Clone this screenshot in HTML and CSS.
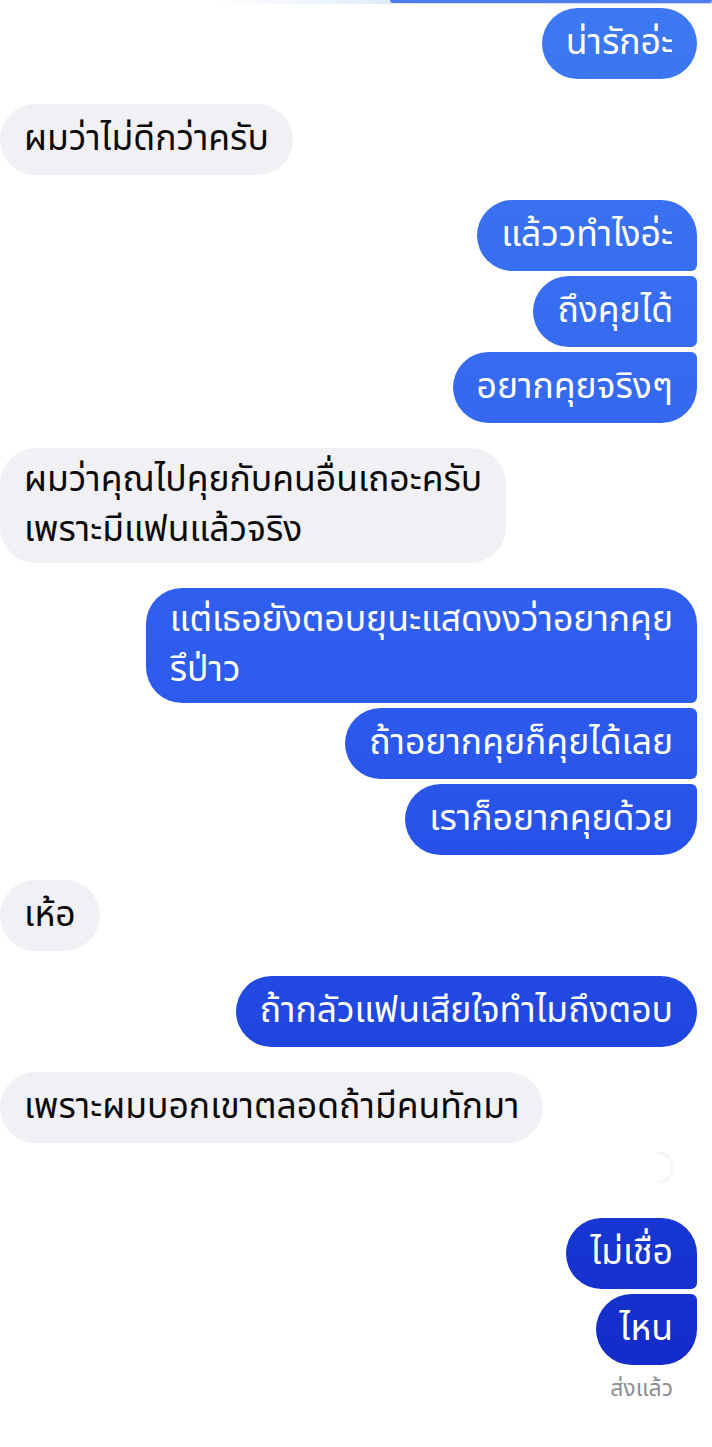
FILE: index.html
```html
<!DOCTYPE html>
<html lang="th">
  <head>
    <meta charset="UTF-8" />
    <meta name="viewport" content="width=device-width, initial-scale=1.0" />
    <title>Messenger</title>
    <link rel="stylesheet" href="styles.css">
  </head>
  <body>
    <div class="top-edge">
      <div class="top-bubble"></div>
    </div>

    <div class="chat">
      <div class="msg out single first-msg">น่ารักอ่ะ</div>

      <div class="msg in single gap">ผมว่าไม่ดีกว่าครับ</div>

      <div class="msg out group-top gap">แล้ววทำไงอ่ะ</div>
      <div class="msg out group-mid">ถึงคุยได้</div>
      <div class="msg out group-end">อยากคุยจริงๆ</div>

      <div class="msg multi in single gap">
        <div class="line">ผมว่าคุณไปคุยกับคนอื่นเถอะครับ</div>
        <div class="line">เพราะมีแฟนแล้วจริง</div>
      </div>

      <div class="msg multi out group-top gap">
        <div class="line">แต่เธอยังตอบยุนะแสดงงว่าอยากคุย</div>
        <div class="line">รึป่าว</div>
      </div>
      <div class="msg out group-mid">ถ้าอยากคุยก็คุยได้เลย</div>
      <div class="msg out group-end">เราก็อยากคุยด้วย</div>

      <div class="msg in single gap">เห้อ</div>

      <div class="msg out single gap">ถ้ากลัวแฟนเสียใจทำไมถึงตอบ</div>

      <div class="msg in single gap">เพราะผมบอกเขาตลอดถ้ามีคนทักมา</div>

      <div class="typing-dot"></div>

      <div class="msg out group-top after-dot">ไม่เชื่อ</div>
      <div class="msg out group-end">ไหน</div>

      <div class="status">ส่งแล้ว</div>
    </div>
  </body>
</html>
```

FILE: styles.css
```css
body {
  margin: 0;
  background-color: #ffffff;
  font-family: "Noto Sans Thai", "Noto Sans", "DejaVu Sans", sans-serif;
}

.top-edge {
  height: 4px;
  background: linear-gradient(to right, #ffffff 30%, #dce6fb 60%, #c9d8fa);
}

.top-bubble {
  margin-left: 390px;
  height: 3px;
  background-color: #4a7ef0;
  border-radius: 0 0 6px 6px;
}

.chat {
  display: flex;
  flex-direction: column;
  padding-bottom: 40px;
}

.msg {
  font-size: 35.5px;
  line-height: 43px;
  padding: 14px 24px;
  border-radius: 36px;
  max-width: 540px;
  white-space: nowrap;
}

/* two-line bubbles: keep lines apart so the tone marks don't collide */
.msg.multi {
  line-height: 50px;
  padding-top: 7px;
  padding-bottom: 8px;
}

.in {
  align-self: flex-start;
  background-color: #f0f0f5;
  color: #0a0a0a;
}

.out {
  align-self: flex-end;
  margin-right: 15px;
  color: #ffffff;
  background-image: linear-gradient(
    to bottom,
    #3d79f2 0px,
    #3569f0 400px,
    #2d5aef 700px,
    #2149e2 1000px,
    #1634d0 1250px,
    #1226c4 1447px
  );
  background-attachment: fixed;
}

.group-top {
  border-bottom-right-radius: 6px;
}

.group-mid {
  border-top-right-radius: 6px;
  border-bottom-right-radius: 6px;
  margin-top: 5px;
}

.group-end {
  border-top-right-radius: 6px;
  margin-top: 5px;
}

.first-msg {
  margin-top: 4px;
}

.gap {
  margin-top: 25px;
}

.typing-dot {
  align-self: flex-end;
  margin-right: 39px;
  margin-top: 9px;
  width: 24px;
  height: 31px;
  border-radius: 50%;
  background: radial-gradient(circle at 35% 50%, #ffffff 55%, #ececef 80%, #ffffff 100%);
}

.after-dot {
  margin-top: 35px;
}

.status {
  align-self: flex-end;
  margin-right: 39px;
  margin-top: 10px;
  font-size: 23px;
  line-height: 28px;
  color: #8e8e93;
}
```
